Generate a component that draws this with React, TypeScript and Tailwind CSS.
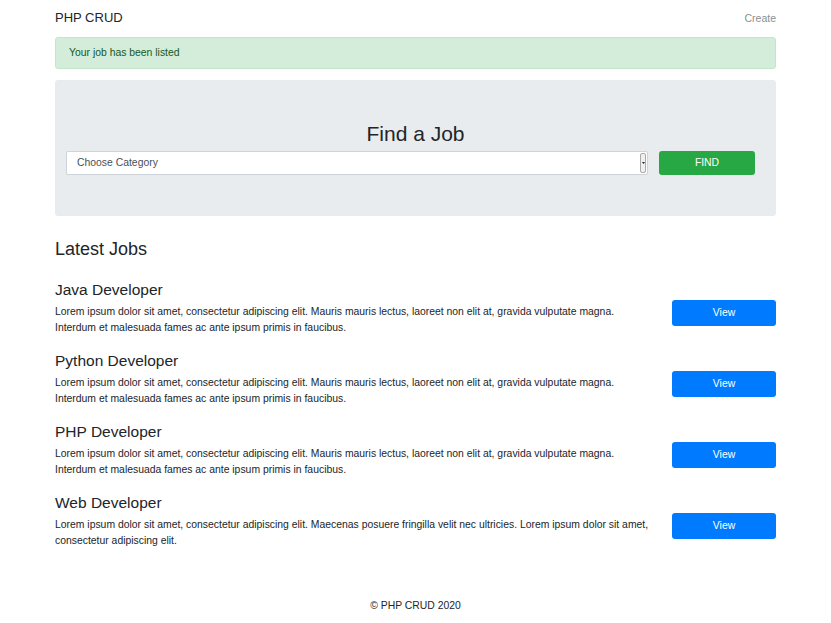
import React from "react";

interface Job {
  title: string;
  text: string;
}

const jobs: Job[] = [
  {
    title: "Java Developer",
    text: "Lorem ipsum dolor sit amet, consectetur adipiscing elit. Mauris mauris lectus, laoreet non elit at, gravida vulputate magna. Interdum et malesuada fames ac ante ipsum primis in faucibus.",
  },
  {
    title: "Python Developer",
    text: "Lorem ipsum dolor sit amet, consectetur adipiscing elit. Mauris mauris lectus, laoreet non elit at, gravida vulputate magna. Interdum et malesuada fames ac ante ipsum primis in faucibus.",
  },
  {
    title: "PHP Developer",
    text: "Lorem ipsum dolor sit amet, consectetur adipiscing elit. Mauris mauris lectus, laoreet non elit at, gravida vulputate magna. Interdum et malesuada fames ac ante ipsum primis in faucibus.",
  },
  {
    title: "Web Developer",
    text: "Lorem ipsum dolor sit amet, consectetur adipiscing elit. Maecenas posuere fringilla velit nec ultricies. Lorem ipsum dolor sit amet, consectetur adipiscing elit.",
  },
];

const App = () => {
  return (
    <div className="min-h-[623px] bg-white text-[#212529] font-['Liberation_Sans',Arial,sans-serif]">
      <div className="w-[721px] mx-auto pt-[10px]">
        {/* header */}
        <div className="flex items-center justify-between h-[16px]">
          <span className="text-[13px] leading-[16px]">PHP CRUD</span>
          <span className="text-[10.5px] leading-[16px] text-[#8a8f94]">Create</span>
        </div>

        <div className="mt-[11px] h-[32px] flex items-center px-[13px] rounded-[3px] bg-[#d4edda] border border-[#c3e6cb] text-[#155724] text-[10.4px]">
          Your job has been listed
        </div>

        {/* search */}
        <div className="mt-[11px] h-[136px] bg-[#e9ecef] rounded-[3px] pt-[41px]">
          <h1 className="text-center text-[21px] leading-[25px]">Find a Job</h1>
          <div className="mt-[5px] flex gap-[11px] pl-[11px] pr-[21px]">
            <div className="flex-1 h-[24px] bg-white border border-[#ced4da] rounded-[2px] flex items-center justify-between pl-[10px] pr-[1px]">
              <span className="text-[10.4px] text-[#495057]">Choose Category</span>
              <div className="h-[20px] w-[6px] border border-[#a9a9a9] bg-[#f0f0f0] rounded-[2px] flex items-center justify-center">
                <svg width="3" height="2" viewBox="0 0 3 2">
                  <path d="M0 0h3L1.5 2z" fill="#222" />
                </svg>
              </div>
            </div>
            <button className="w-[96px] h-[24px] rounded-[3px] bg-[#28a745] text-white text-[10.4px]">FIND</button>
          </div>
        </div>

        {/* jobs */}
        <h2 className="mt-[21px] text-[18px] leading-[24px]">Latest Jobs</h2>
        <div className="mt-[19px] flex flex-col gap-[15px]">
          {jobs.map((job) => (
            <div key={job.title} className="flex justify-between">
              <div className="w-[600px]">
                <h3 className="text-[15.5px] leading-[19px]">{job.title}</h3>
                <p className="mt-[5px] text-[10.4px] leading-[16px]">{job.text}</p>
              </div>
              <div>
                <button className="mt-[20px] w-[104px] h-[26px] rounded-[3px] bg-[#007bff] text-white text-[10.4px]">View</button>
              </div>
            </div>
          ))}
        </div>

        <div className="mt-[49px] text-center text-[10.4px] leading-[16px]">&copy; PHP CRUD 2020</div>
      </div>
    </div>
  );
};

export default App;
